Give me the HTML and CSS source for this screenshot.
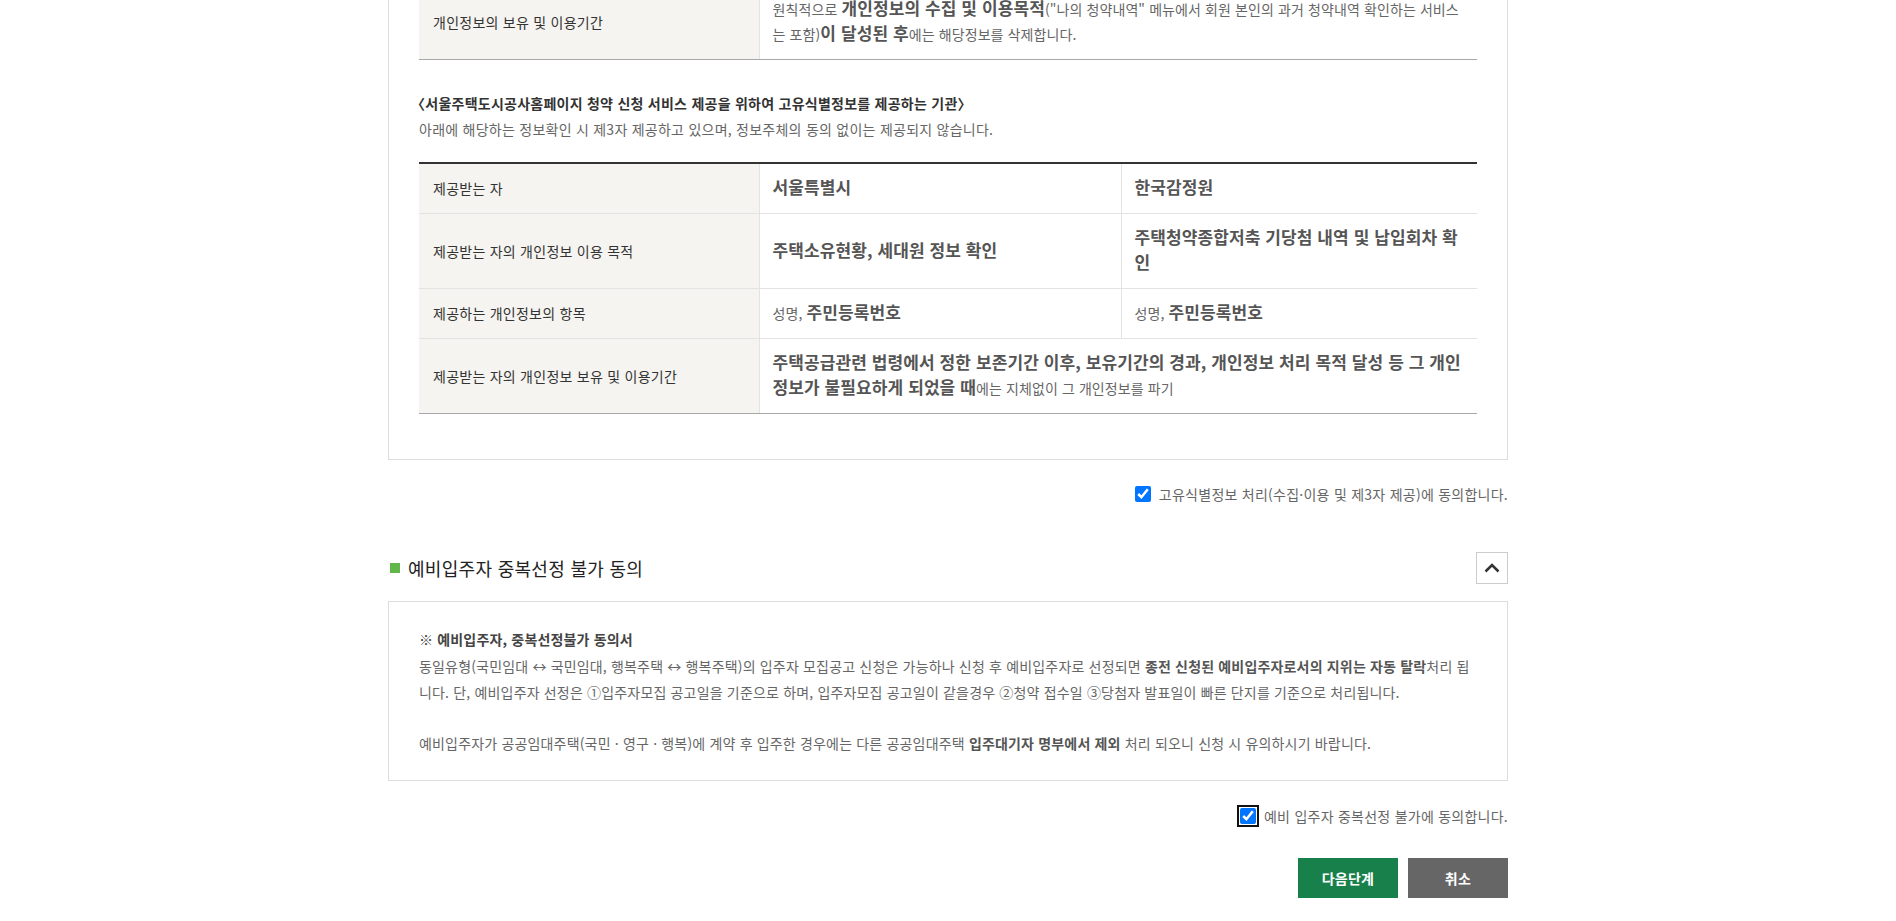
FILE: index.html
```html
<!DOCTYPE html>
<html lang="ko">
<head>
    <meta charset="UTF-8">
    <meta name="viewport" content="width=device-width, initial-scale=1.0">
    <title>고유식별정보 처리 동의</title>
    <link rel="stylesheet" href="styles.css">
</head>
<body>
    <div class="container">
        <div class="agree-box">
            <table class="info-table">
                <colgroup><col class="col-th"><col class="col-td"><col></colgroup>
                <tr>
                    <th>개인정보의 보유 및 이용기간</th>
                    <td colspan="2">원칙적으로 <strong>개인정보의 수집 및 이용목적</strong>("나의 청약내역" 메뉴에서 회원 본인의 과거 청약내역 확인하는 서비스는 포함)<strong>이 달성된 후</strong>에는 해당정보를 삭제합니다.</td>
                </tr>
            </table>

            <p class="sub-title"><span class="brk">〈</span>서울주택도시공사홈페이지 청약 신청 서비스 제공을 위하여 고유식별정보를 제공하는 기관〉</p>
            <p class="sub-desc">아래에 해당하는 정보확인 시 제3자 제공하고 있으며, 정보주체의 동의 없이는 제공되지 않습니다.</p>

            <table class="info-table top-line">
                <colgroup><col class="col-th"><col class="col-td"><col></colgroup>
                <tr>
                    <th>제공받는 자</th>
                    <td><strong>서울특별시</strong></td>
                    <td><strong>한국감정원</strong></td>
                </tr>
                <tr>
                    <th>제공받는 자의 개인정보 이용 목적</th>
                    <td><strong>주택소유현황, 세대원 정보 확인</strong></td>
                    <td><strong>주택청약종합저축 기당첨 내역 및 납입회차 확인</strong></td>
                </tr>
                <tr>
                    <th>제공하는 개인정보의 항목</th>
                    <td>성명, <strong>주민등록번호</strong></td>
                    <td>성명, <strong>주민등록번호</strong></td>
                </tr>
                <tr>
                    <th>제공받는 자의 개인정보 보유 및 이용기간</th>
                    <td colspan="2"><strong>주택공급관련 법령에서 정한 보존기간 이후, 보유기간의 경과, 개인정보 처리 목적 달성 등 그 개인정보가 불필요하게 되었을 때</strong>에는 지체없이 그 개인정보를 파기</td>
                </tr>
            </table>
        </div>

        <label class="agree-check">
            <input type="checkbox" checked>
            <span>고유식별정보 처리(수집·이용 및 제3자 제공)에 동의합니다.</span>
        </label>

        <div class="section-head">
            <h3 class="section-title">예비입주자 중복선정 불가 동의</h3>
            <button type="button" class="btn-toggle" aria-label="접기">
                <svg width="16" height="10" viewBox="0 0 16 10"><polyline points="1.5,8.5 8,2 14.5,8.5" fill="none" stroke="#333" stroke-width="2.6"/></svg>
            </button>
        </div>

        <div class="agree-box notice-box">
            <p class="notice-title">※ 예비입주자, 중복선정불가 동의서</p>
            <p>동일유형(국민임대 ↔ 국민임대, 행복주택 ↔ 행복주택)의 입주자 모집공고 신청은 가능하나 신청 후 예비입주자로 선정되면 <b>종전 신청된 예비입주자로서의 지위는 자동 탈락</b>처리 됩니다. 단, 예비입주자 선정은 ①입주자모집 공고일을 기준으로 하며, 입주자모집 공고일이 같을경우 ②청약 접수일 ③당첨자 발표일이 빠른 단지를 기준으로 처리됩니다.</p>
            <p class="notice-last">예비입주자가 공공임대주택(국민 · 영구 · 행복)에 계약 후 입주한 경우에는 다른 공공임대주택 <b>입주대기자 명부에서 제외</b> 처리 되오니 신청 시 유의하시기 바랍니다.</p>
        </div>

        <label class="agree-check second">
            <input type="checkbox" class="focused" checked>
            <span>예비 입주자 중복선정 불가에 동의합니다.</span>
        </label>

        <div class="btn-area">
            <button type="button" class="btn btn-next">다음단계</button>
            <button type="button" class="btn btn-cancel">취소</button>
        </div>
    </div>
</body>
</html>
```

FILE: styles.css
```css
* {
    box-sizing: border-box;
}

body {
    margin: 0;
    font-family: "Noto Sans CJK KR", "Noto Sans", sans-serif;
    font-size: 14px;
    letter-spacing: 0.25px;
    color: #666;
    background: #fff;
}

p {
    margin: 0;
}

.container {
    width: 1120px;
    margin: -46px auto 0;
    padding-bottom: 30px;
}

.agree-box {
    border: 1px solid #ddd;
    padding: 30px 30px 45px;
}

/* tables */
.info-table {
    width: 100%;
    border-collapse: collapse;
    table-layout: fixed;
}

.info-table .col-th {
    width: 340px;
}

.info-table .col-td {
    width: 362px;
}

.info-table th,
.info-table td {
    padding: 12px 13px;
    line-height: 25px;
    text-align: left;
    vertical-align: middle;
    border-bottom: 1px solid #e3e3e3;
}

.info-table th {
    padding-left: 14px;
    background: #f5f4f0;
    font-weight: normal;
    color: #333;
}

.info-table td {
    border-left: 1px solid #e3e3e3;
    letter-spacing: 0.1px;
}

.info-table tr:last-child th,
.info-table tr:last-child td {
    border-bottom-color: #a8a8a8;
}

.info-table strong {
    font-size: 17px;
    line-height: 20px;
    letter-spacing: 0.1px;
    color: #555;
}

.top-line {
    border-top: 2px solid #333;
}

.sub-title {
    margin-top: 30px;
    line-height: 26px;
    font-weight: bold;
    color: #333;
}

.sub-title .brk {
    margin-left: -8px;
}

.sub-desc {
    line-height: 26px;
    margin-bottom: 20px;
}

/* checkbox rows */
.agree-check {
    display: flex;
    justify-content: flex-end;
    align-items: center;
    gap: 8px;
    margin-top: 26px;
    line-height: 16px;
    cursor: pointer;
}

.agree-check input {
    width: 16px;
    height: 16px;
    margin: 0;
}

.agree-check.second {
    margin-top: 27px;
}

.agree-check .focused {
    outline: 2px solid #111;
    outline-offset: 1px;
}

/* section */
.section-head {
    display: flex;
    justify-content: space-between;
    align-items: center;
    margin-top: 50px;
    margin-bottom: 17px;
}

.section-title {
    display: flex;
    align-items: center;
    gap: 8px;
    margin: 0;
    font-size: 18px;
    font-weight: normal;
    letter-spacing: 0.3px;
    color: #222;
}

.section-title::before {
    content: "";
    width: 10px;
    height: 10px;
    margin-left: 2px;
    background: #5fb847;
}

.btn-toggle {
    width: 32px;
    height: 32px;
    padding: 0;
    border: 1px solid #ccc;
    background: #fff;
    display: flex;
    align-items: center;
    justify-content: center;
    cursor: pointer;
}

.notice-box {
    padding: 24px 30px;
    line-height: 26.6px;
    letter-spacing: 0.17px;
}

.notice-box b {
    color: #555;
}

.notice-title {
    font-weight: bold;
    color: #444;
}

.notice-last {
    margin-top: 24px;
}

/* buttons */
.btn-area {
    display: flex;
    justify-content: flex-end;
    gap: 10px;
    margin-top: 34px;
}

.btn {
    width: 100px;
    height: 40px;
    border: none;
    font-family: inherit;
    font-size: 14px;
    font-weight: bold;
    letter-spacing: 0.25px;
    color: #fff;
    cursor: pointer;
}

.btn-next {
    background: #17804b;
}

.btn-cancel {
    background: #666;
}
```
